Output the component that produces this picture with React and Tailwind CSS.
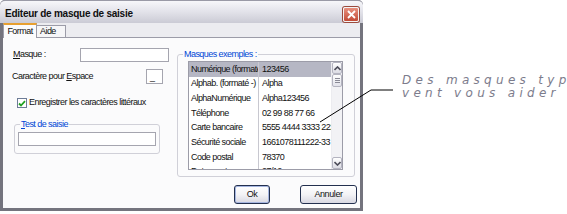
import React from 'react';

const ui = { fontFamily: '"Liberation Sans", Arial, sans-serif' };

const rows = [
  ['Numérique (formaté', '123456'],
  ['Alphab. (formaté -)', 'Alpha'],
  ['AlphaNumérique', 'Alpha123456'],
  ['Téléphone', '02 99 88 77 66'],
  ['Carte bancaire', '5555 4444 3333 2222'],
  ['Sécurité sociale', '1661078111222-33'],
  ['Code postal', '78370'],
  ['Date courte', '27/12'],
];

function GroupBox({ label, className, children }) {
  return (
    <div className={`relative border border-[#d0d0d8] rounded-[3px] ${className}`}>
      <span className="absolute -top-[6px] left-[5px] bg-[#fbfbfc] px-[1px] leading-[10px] text-[#0046d5]">
        {label}
      </span>
      {children}
    </div>
  );
}

function ScrollArrow({ up }) {
  return (
    <div className="h-[12px] border border-[#b4b4c0] rounded-[2px] bg-gradient-to-b from-[#ffffff] to-[#dcdce4] flex items-center justify-center">
      <svg width="7" height="5" viewBox="0 0 7 5">
        <path d={up ? 'M0.5 4 L3.5 1 L6.5 4' : 'M0.5 1 L3.5 4 L6.5 1'} stroke="#4d4d5a" strokeWidth="1.6" fill="none" />
      </svg>
    </div>
  );
}

function Button({ children, className }) {
  return (
    <button className={`h-[19px] rounded-[3px] border border-[#23304f] bg-gradient-to-b from-[#ffffff] via-[#f3f3f6] to-[#d8d8e2] text-[9px] tracking-[-0.4px] text-[#111] flex items-center justify-center ${className}`}>
      {children}
    </button>
  );
}

export default function App() {
  return (
    <div className="w-[567px] h-[214px] bg-white relative flex items-start overflow-hidden" style={ui}>
      {/* Dialog */}
      <div className="w-[363px] flex flex-col bg-[#74747e] rounded-t-[5px] shrink-0">
        {/* Title bar */}
        <div className="h-[23px] flex items-center justify-between pl-[5px] pr-[4px] rounded-t-[5px] bg-gradient-to-b from-[#f7f7fa] via-[#e2e2e9] to-[#cbcbd5] border-t border-[#9a9aa6]">
          <span className="text-[10px] font-bold tracking-[-0.25px] text-[#101010] mt-[3px]">
            Editeur de masque de saisie
          </span>
          <div className="w-[16px] h-[15px] mt-[5px] rounded-[2px] border border-[#f4f4f4] bg-gradient-to-b from-[#e8907e] to-[#c24a36] flex items-center justify-center shadow-[0_0_0_1px_#9b4a3c]">
            <svg width="9" height="9" viewBox="0 0 9 9">
              <path d="M1 1 L8 8 M8 1 L1 8" stroke="white" strokeWidth="1.8" />
            </svg>
          </div>
        </div>

        {/* Body */}
        <div className="mx-[3px] mb-[3px] h-[185px] bg-[#fbfbfc] flex flex-col text-[9px] tracking-[-0.55px] text-[#111]">
          {/* Tabs */}
          <div className="h-[15px] bg-[#ececf0] flex items-end border-b border-[#9c9ca8]">
            <div className="h-[15px] w-[34px] -mb-px bg-[#fbfbfc] border-x border-[#9c9ca8] border-t-2 border-t-[#e8a030] flex items-center justify-center text-[9px]">
              Format
            </div>
            <div className="h-[12px] w-[29px] bg-[#f6f6f8] border-r border-t border-[#9c9ca8] flex items-center pl-[3px]">
              Aide
            </div>
          </div>

          {/* Panel */}
          <div className="flex-1 flex flex-col">
            <div className="flex pl-[9px]">
              {/* Left column */}
              <div className="w-[157px] flex flex-col">
                <div className="mt-[10px] h-[14px] flex items-center">
                  <span className="pl-[1px]"><span className="underline">M</span>asque :</span>
                  <div className="ml-auto w-[89px] h-[14px] bg-white border border-[#a5a5af]" />
                </div>
                <div className="mt-[7px] h-[15px] flex items-center">
                  <span>Caractère pour <span className="underline">E</span>space</span>
                  <div className="ml-auto mr-[6px] w-[17px] h-[15px] bg-white border border-[#a5a5af] flex items-end pl-[3px] pb-[1px] leading-none">
                    _
                  </div>
                </div>
                <div className="mt-[14px] ml-[5px] h-[10px] flex items-center gap-[2px]">
                  <div className="w-[10px] h-[10px] bg-white border border-[#6d7c96] flex items-center justify-center">
                    <svg width="8" height="7" viewBox="0 0 8 7">
                      <path d="M1 3.5 L3 5.5 L7 1.2" stroke="#21a121" strokeWidth="1.8" fill="none" />
                    </svg>
                  </div>
                  <span>Enregistrer les caractères littéraux</span>
                </div>
                <GroupBox
                  className="mt-[16px] ml-[2px] w-[146px] h-[30px] pl-[3px] pt-[7px]"
                  label={<><span className="underline">T</span>est de saisie</>}
                >
                  <div className="w-[138px] h-[14px] bg-white border border-[#a5a5af]" />
                </GroupBox>
              </div>

              {/* Right column */}
              <GroupBox
                className="ml-[8px] mt-[16px] w-[178px] h-[123px] pl-[10px] pt-[6px]"
                label="Masques exemples :"
              >
                <div className="w-[155px] h-[109px] bg-white border border-[#9c9ca8] flex overflow-hidden">
                  <div className="flex-1 flex flex-col overflow-hidden">
                    {rows.map(([a, b], i) => (
                      <div
                        key={a}
                        className={`h-[14.7px] shrink-0 flex items-center ${i === 0 ? 'bg-[#b6b7c4]' : ''}`}
                      >
                        <div className="w-[70px] h-full border-r border-[#c8c8d0] pl-[2px] flex items-center whitespace-nowrap overflow-hidden">
                          {a}
                        </div>
                        <div className="flex-1 pl-[3px] whitespace-nowrap overflow-hidden">{b}</div>
                      </div>
                    ))}
                  </div>
                  <div className="w-[11px] bg-[#f2f2f5] flex flex-col border-l border-[#ececf0]">
                    <ScrollArrow up />
                    <div className="h-[13px] border border-[#b4b4c0] rounded-[2px] bg-gradient-to-b from-[#fefefe] to-[#e2e2ea] flex flex-col items-center justify-center gap-[1px]">
                      <div className="w-[5px] h-px bg-[#8a8a96]" />
                      <div className="w-[5px] h-px bg-[#8a8a96]" />
                      <div className="w-[5px] h-px bg-[#8a8a96]" />
                    </div>
                    <div className="flex-1" />
                    <ScrollArrow />
                  </div>
                </div>
              </GroupBox>
            </div>

            {/* Buttons */}
            <div className="mt-[8px] flex justify-end gap-[30px] pr-[3px]">
              <Button className="w-[36px] shadow-[inset_0_0_0_1px_#a6b6e0]">Ok</Button>
              <Button className="w-[57px]">Annuler</Button>
            </div>
          </div>
        </div>
      </div>

      {/* Annotation */}
      <div
        className="ml-[39px] mt-[74px] text-[12px] italic leading-[13px] tracking-[4.3px] text-[#7c7c8c] whitespace-nowrap"
        style={{ fontFamily: '"DejaVu Sans", Verdana, sans-serif' }}
      >
        <div>Des masques types</div>
        <div>vent vous aider</div>
      </div>

      {/* Callout line */}
      <svg className="absolute inset-0 pointer-events-none" width="567" height="214">
        <polyline points="320,122 371,90 393,90" fill="none" stroke="#000" strokeWidth="1" />
      </svg>
    </div>
  );
}
